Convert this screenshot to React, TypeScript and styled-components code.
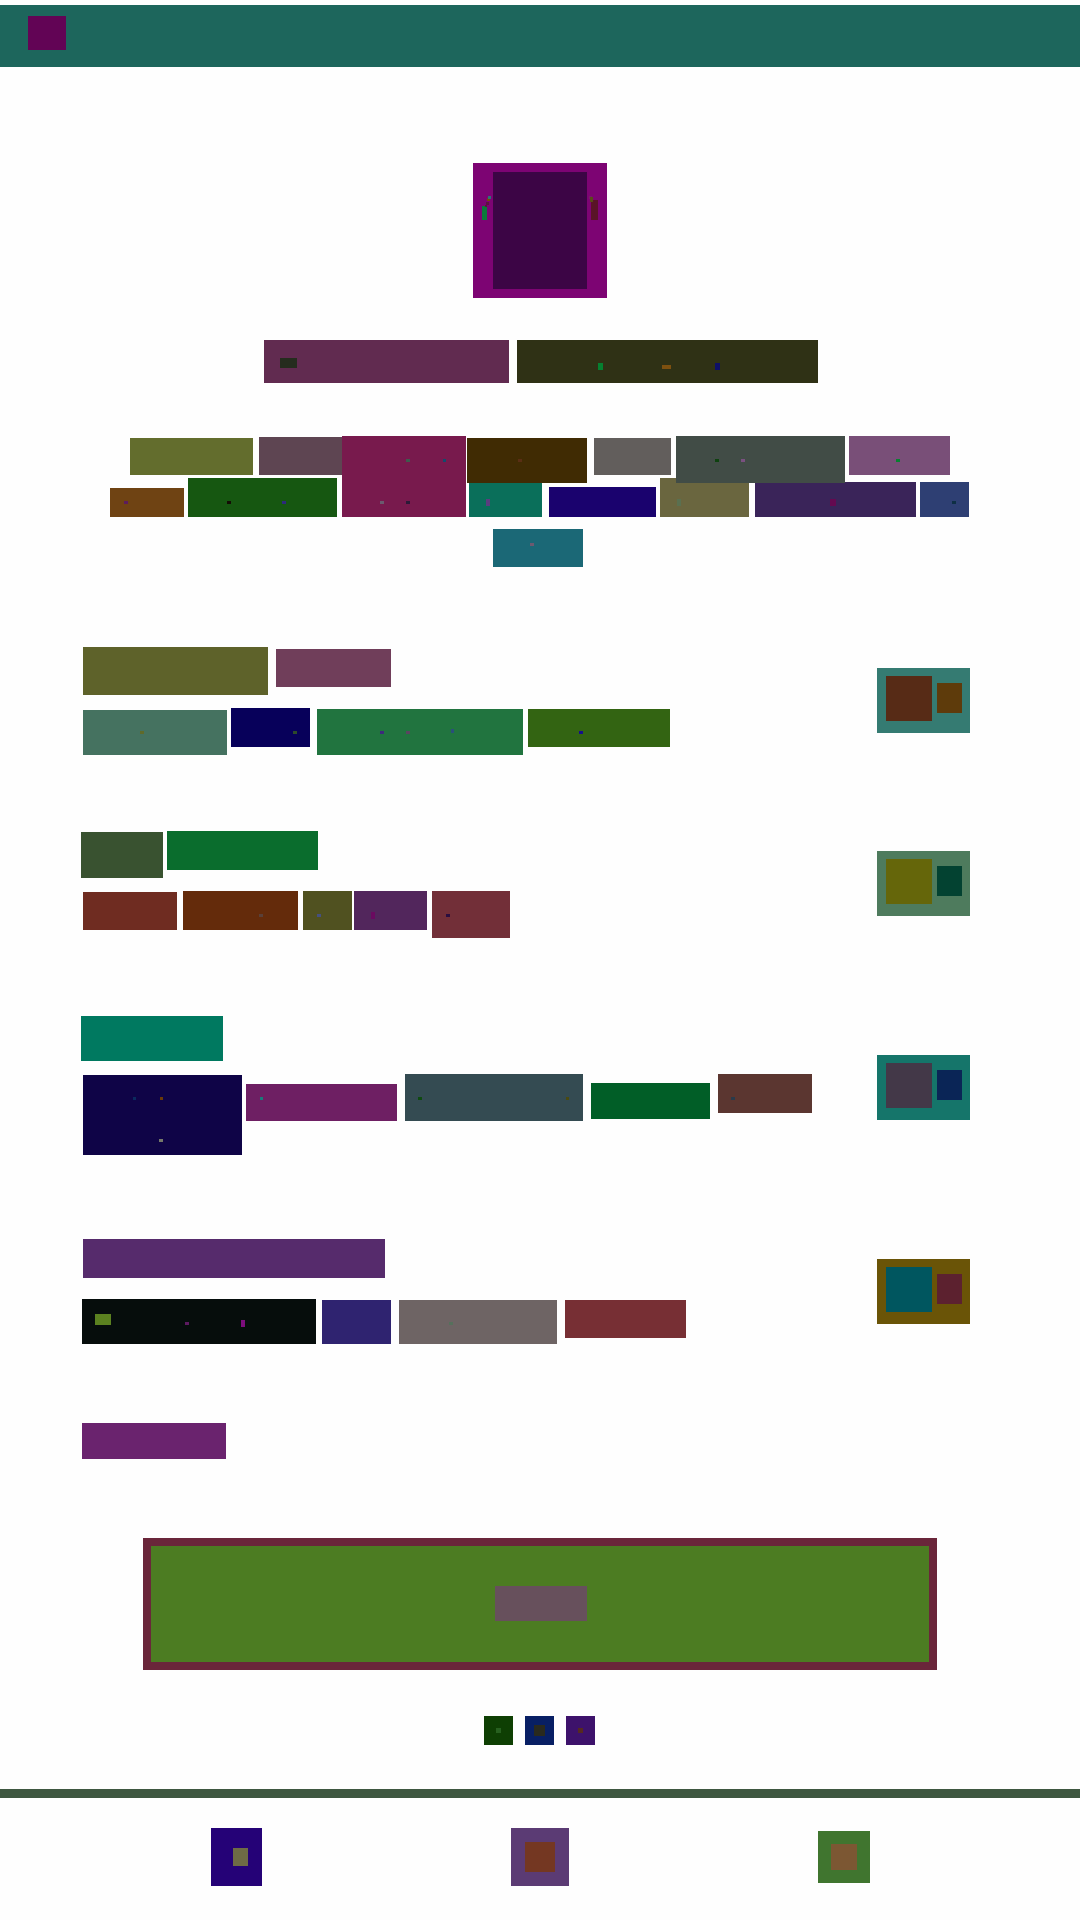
import React from 'react'
import styled, {createGlobalStyle} from 'styled-components'

interface MarkData {
  x: number
  y: number
  w: number
  h: number
  c: string
}

interface WordData {
  x: number
  y: number
  w: number
  h: number
  c: string
  marks?: MarkData[]
}

interface LineData {
  top: number
  height: number
  raised?: boolean
  words: WordData[]
}

const m = (x: number, y: number, w: number, h: number, c: string): MarkData => ({x, y, w, h, c})

const GlobalStyle = createGlobalStyle`
  html, body {
    margin: 0;
    padding: 0;
    background: #fefefe;
  }
  body {
    font-family: "Liberation Sans", sans-serif;
  }
  * {
    box-sizing: border-box;
  }
`

const Page = styled.div`
  width: 1080px;
  height: 1920px;
  overflow: hidden;
  padding-top: 5px;
`

const Header = styled.header`
  display: flex;
  align-items: flex-start;
  height: 62px;
  padding: 11px 0 0 28px;
  background: #1d665c;
`

const Logo = styled.div`
  width: 38px;
  height: 34px;
  background: #620455;
`

const Hero = styled.section`
  display: flex;
  justify-content: center;
  margin-top: 96px;
`

const Door = styled.div`
  position: relative;
  width: 134px;
  height: 135px;
  padding: 9px 20px;
  background: #7d0473;
`

const DoorPanel = styled.div`
  width: 94px;
  height: 117px;
  background: #3c0545;
`

const Block = styled.div<{$mt?: number}>`
  margin-top: ${(p) => p.$mt ?? 0}px;
`

const Section = styled.section<{$mt: number}>`
  display: flex;
  align-items: flex-start;
  justify-content: space-between;
  margin-top: ${(p) => p.$mt}px;
  padding-right: 110px;
`

const Lines = styled.div`
  flex: 1;
`

const Line = styled.div<{$height: number; $raised?: boolean}>`
  display: flex;
  align-items: flex-start;
  height: ${(p) => p.$height}px;
  ${(p) =>
    p.$raised &&
    `
  position: relative;
  z-index: 1;
`}
`

const Word = styled.span<{$w: number; $h: number; $c: string; $ml: number; $mt: number}>`
  position: relative;
  display: block;
  flex-shrink: 0;
  width: ${(p) => p.$w}px;
  height: ${(p) => p.$h}px;
  margin-left: ${(p) => p.$ml}px;
  margin-top: ${(p) => p.$mt}px;
  background: ${(p) => p.$c};
`

const Mark = styled.i<{$x: number; $y: number; $w: number; $h: number; $c: string}>`
  position: absolute;
  left: ${(p) => p.$x}px;
  top: ${(p) => p.$y}px;
  width: ${(p) => p.$w}px;
  height: ${(p) => p.$h}px;
  background: ${(p) => p.$c};
`

const Card = styled.div<{$mt: number; $c: string}>`
  display: flex;
  align-items: flex-start;
  flex-shrink: 0;
  gap: 5px;
  width: 93px;
  height: 65px;
  margin-top: ${(p) => p.$mt}px;
  padding: 8px 0 0 9px;
  background: ${(p) => p.$c};
`

const CardLarge = styled.div<{$c: string}>`
  width: 46px;
  height: 45px;
  background: ${(p) => p.$c};
`

const CardSmall = styled.div<{$c: string}>`
  width: 25px;
  height: 30px;
  margin-top: 7px;
  background: ${(p) => p.$c};
`

const Banner = styled.div`
  display: flex;
  align-items: flex-start;
  justify-content: center;
  width: 794px;
  height: 132px;
  margin: 79px 0 0 143px;
  padding-top: 40px;
  border: 8px solid #6a263a;
  background: #4c7c22;
`

const BannerButton = styled.div`
  width: 92px;
  height: 35px;
  margin-left: 2px;
  background: #67505c;
`

const Pager = styled.nav`
  display: flex;
  gap: 12px;
  margin: 46px 0 0 484px;
`

const PagerItem = styled.div<{$c: string}>`
  display: flex;
  align-items: center;
  justify-content: center;
  width: 29px;
  height: 29px;
  background: ${(p) => p.$c};
`

const PagerGlyph = styled.span<{$size: number; $c: string}>`
  display: block;
  width: ${(p) => p.$size}px;
  height: ${(p) => p.$size}px;
  background: ${(p) => p.$c};
`

const FooterBar = styled.div`
  height: 9px;
  margin-top: 44px;
  background: #3e5740;
`

const FooterNav = styled.footer`
  display: flex;
  align-items: center;
  height: 58px;
  margin: 30px 0 0 211px;
`

const FooterItem = styled.div<{$w: number; $h: number; $c: string; $ml?: number}>`
  display: flex;
  align-items: center;
  justify-content: center;
  width: ${(p) => p.$w}px;
  height: ${(p) => p.$h}px;
  margin-left: ${(p) => p.$ml ?? 0}px;
  background: ${(p) => p.$c};
`

const FooterGlyph = styled.span<{$w: number; $h: number; $c: string; $shift?: number}>`
  display: block;
  width: ${(p) => p.$w}px;
  height: ${(p) => p.$h}px;
  margin-left: ${(p) => p.$shift ?? 0}px;
  background: ${(p) => p.$c};
`

const doorMarks: MarkData[] = [
  m(482, 206, 5, 14, '#0a7a3a'),
  m(485, 205, 2, 2, '#5c1440'),
  m(486, 202, 3, 3, '#5c1440'),
  m(487, 198, 3, 3, '#7a4410'),
  m(488, 196, 3, 3, '#2a7478'),
  m(591, 200, 7, 20, '#5a1428'),
  m(589, 196, 3, 3, '#7a1a6a'),
  m(590, 197, 3, 5, '#5a4a18'),
]

const titleLine: LineData = {
  top: 340,
  height: 43,
  words: [
    {x: 264, y: 340, w: 245, h: 43, c: '#612b50', marks: [m(280, 358, 17, 10, '#252c1e')]},
    {
      x: 517,
      y: 340,
      w: 301,
      h: 43,
      c: '#2f3115',
      marks: [m(598, 363, 5, 7, '#068030'), m(662, 365, 9, 4, '#7d500f'), m(715, 363, 5, 7, '#0e1068')],
    },
  ],
}

const introLines: LineData[] = [
  {
    top: 436,
    height: 42,
    raised: true,
    words: [
      {x: 130, y: 438, w: 123, h: 37, c: '#636d2d'},
      {x: 259, y: 437, w: 83, h: 38, c: '#5e4552'},
      {
        x: 342,
        y: 436,
        w: 124,
        h: 81,
        c: '#781a4d',
        marks: [
          m(406, 459, 4, 3, '#3f5a4d'),
          m(443, 459, 3, 3, '#134a6c'),
          m(380, 501, 4, 3, '#6b5a6e'),
          m(406, 501, 4, 3, '#2c1a38'),
        ],
      },
      {x: 467, y: 438, w: 120, h: 45, c: '#402b03', marks: [m(518, 459, 4, 3, '#5a2e14')]},
      {x: 594, y: 438, w: 77, h: 37, c: '#625e5c'},
      {
        x: 676,
        y: 436,
        w: 169,
        h: 47,
        c: '#414c46',
        marks: [m(715, 459, 4, 3, '#0e420f'), m(741, 459, 4, 3, '#7a5080')],
      },
      {x: 849, y: 436, w: 101, h: 39, c: '#794f78', marks: [m(896, 459, 4, 3, '#078030')]},
    ],
  },
  {
    top: 478,
    height: 51,
    words: [
      {x: 110, y: 488, w: 74, h: 29, c: '#6f4313', marks: [m(124, 501, 4, 3, '#5c1d5c')]},
      {
        x: 188,
        y: 478,
        w: 149,
        h: 39,
        c: '#165711',
        marks: [m(227, 501, 4, 3, '#140d05'), m(282, 501, 4, 3, '#2d2a7b')],
      },
      {x: 469, y: 483, w: 73, h: 34, c: '#0a6f5a', marks: [m(486, 499, 4, 7, '#5a3e7f')]},
      {x: 549, y: 487, w: 107, h: 30, c: '#1a026e'},
      {x: 660, y: 478, w: 89, h: 39, c: '#6a663f', marks: [m(677, 499, 4, 7, '#5a7050')]},
      {x: 755, y: 482, w: 161, h: 35, c: '#3a2459', marks: [m(830, 499, 6, 7, '#640a50')]},
      {x: 920, y: 482, w: 49, h: 35, c: '#2e3f73', marks: [m(952, 501, 4, 3, '#0e2f44')]},
    ],
  },
  {
    top: 529,
    height: 38,
    words: [{x: 493, y: 529, w: 90, h: 38, c: '#1b6876', marks: [m(530, 543, 4, 3, '#6c5a70')]}],
  },
]

const sectionOne: LineData[] = [
  {
    top: 647,
    height: 61,
    words: [
      {x: 83, y: 647, w: 185, h: 48, c: '#5e622a'},
      {x: 276, y: 649, w: 115, h: 38, c: '#703e5a'},
    ],
  },
  {
    top: 708,
    height: 47,
    words: [
      {x: 83, y: 710, w: 144, h: 45, c: '#457260', marks: [m(140, 731, 4, 3, '#5f6a2a')]},
      {x: 231, y: 708, w: 79, h: 39, c: '#07005a', marks: [m(293, 731, 4, 3, '#2e4a2a')]},
      {
        x: 317,
        y: 709,
        w: 206,
        h: 46,
        c: '#21743f',
        marks: [m(380, 731, 4, 3, '#3d2a7c'), m(406, 731, 4, 3, '#5a4560'), m(451, 729, 3, 4, '#29507a')],
      },
      {x: 528, y: 709, w: 142, h: 38, c: '#336412', marks: [m(579, 731, 4, 3, '#15108c')]},
    ],
  },
]

const sectionTwo: LineData[] = [
  {
    top: 831,
    height: 60,
    words: [
      {x: 81, y: 832, w: 82, h: 46, c: '#395230'},
      {x: 167, y: 831, w: 151, h: 39, c: '#0a6d2d'},
    ],
  },
  {
    top: 891,
    height: 47,
    words: [
      {x: 83, y: 892, w: 94, h: 38, c: '#6f2c21'},
      {x: 183, y: 891, w: 115, h: 39, c: '#642b0b', marks: [m(259, 914, 4, 3, '#5a4038')]},
      {x: 303, y: 891, w: 49, h: 39, c: '#505120', marks: [m(317, 914, 4, 3, '#45507f')]},
      {x: 354, y: 891, w: 73, h: 39, c: '#52265c', marks: [m(371, 912, 4, 7, '#6a0a60')]},
      {x: 432, y: 891, w: 78, h: 47, c: '#722f38', marks: [m(446, 914, 4, 3, '#2a0e40')]},
    ],
  },
]

const sectionThree: LineData[] = [
  {
    top: 1016,
    height: 58,
    words: [{x: 81, y: 1016, w: 142, h: 45, c: '#007960'}],
  },
  {
    top: 1074,
    height: 81,
    words: [
      {
        x: 83,
        y: 1075,
        w: 159,
        h: 80,
        c: '#0f0447',
        marks: [m(133, 1097, 3, 3, '#0a2a5e'), m(160, 1097, 3, 3, '#6a3a08'), m(159, 1139, 4, 3, '#75786a')],
      },
      {x: 246, y: 1084, w: 151, h: 37, c: '#6e1f63', marks: [m(260, 1097, 3, 3, '#1a7a7a')]},
      {
        x: 405,
        y: 1074,
        w: 178,
        h: 47,
        c: '#344b52',
        marks: [m(418, 1097, 4, 3, '#0e4a10'), m(566, 1097, 3, 3, '#4a4a10')],
      },
      {x: 591, y: 1083, w: 119, h: 36, c: '#015e27'},
      {x: 718, y: 1074, w: 94, h: 39, c: '#5b3630', marks: [m(731, 1097, 4, 3, '#2a3a4a')]},
    ],
  },
]

const sectionFour: LineData[] = [
  {
    top: 1239,
    height: 60,
    words: [{x: 83, y: 1239, w: 302, h: 39, c: '#562b6c'}],
  },
  {
    top: 1299,
    height: 45,
    words: [
      {
        x: 82,
        y: 1299,
        w: 234,
        h: 45,
        c: '#060d0c',
        marks: [m(95, 1314, 16, 11, '#5b8120'), m(185, 1322, 4, 3, '#5c1a60'), m(241, 1320, 4, 7, '#7c0d7c')],
      },
      {x: 322, y: 1300, w: 69, h: 44, c: '#2f2370'},
      {x: 399, y: 1300, w: 158, h: 44, c: '#6e6464', marks: [m(449, 1322, 4, 3, '#56705c')]},
      {x: 565, y: 1300, w: 121, h: 38, c: '#772f34'},
    ],
  },
]

const sectionFive: LineData[] = [
  {
    top: 1423,
    height: 36,
    words: [{x: 82, y: 1423, w: 144, h: 36, c: '#6a236e'}],
  },
]

const WordLine: React.FC<{line: LineData}> = ({line}) => {
  let right = 0
  return (
    <Line $height={line.height} $raised={line.raised}>
      {line.words.map((word) => {
        const ml = word.x - right
        right = word.x + word.w
        return (
          <Word key={word.x} $w={word.w} $h={word.h} $c={word.c} $ml={ml} $mt={word.y - line.top}>
            {word.marks?.map((mark) => (
              <Mark
                key={`${mark.x}-${mark.y}`}
                $x={mark.x - word.x}
                $y={mark.y - word.y}
                $w={mark.w}
                $h={mark.h}
                $c={mark.c}
              />
            ))}
          </Word>
        )
      })}
    </Line>
  )
}

const App: React.FC = () => {
  return (
    <Page>
      <GlobalStyle />
      <Header>
        <Logo />
      </Header>

      <Hero>
        <Door>
          <DoorPanel />
          {doorMarks.map((mark) => (
            <Mark
              key={`${mark.x}-${mark.y}`}
              $x={mark.x - 473}
              $y={mark.y - 163}
              $w={mark.w}
              $h={mark.h}
              $c={mark.c}
            />
          ))}
        </Door>
      </Hero>

      <Block $mt={42}>
        <WordLine line={titleLine} />
      </Block>

      <Block $mt={53}>
        {introLines.map((line) => (
          <WordLine key={line.top} line={line} />
        ))}
      </Block>

      <Section $mt={80}>
        <Lines>
          {sectionOne.map((line) => (
            <WordLine key={line.top} line={line} />
          ))}
        </Lines>
        <Card $mt={21} $c="#357b72">
          <CardLarge $c="#572b16" />
          <CardSmall $c="#5e3b0b" />
        </Card>
      </Section>

      <Section $mt={76}>
        <Lines>
          {sectionTwo.map((line) => (
            <WordLine key={line.top} line={line} />
          ))}
        </Lines>
        <Card $mt={20} $c="#4e7b5d">
          <CardLarge $c="#65660a" />
          <CardSmall $c="#034231" />
        </Card>
      </Section>

      <Section $mt={78}>
        <Lines>
          {sectionThree.map((line) => (
            <WordLine key={line.top} line={line} />
          ))}
        </Lines>
        <Card $mt={39} $c="#15756a">
          <CardLarge $c="#433848" />
          <CardSmall $c="#0a2556" />
        </Card>
      </Section>

      <Section $mt={84}>
        <Lines>
          {sectionFour.map((line) => (
            <WordLine key={line.top} line={line} />
          ))}
        </Lines>
        <Card $mt={20} $c="#6a5407">
          <CardLarge $c="#00565f" />
          <CardSmall $c="#5c212f" />
        </Card>
      </Section>

      <Section $mt={79}>
        <Lines>
          {sectionFive.map((line) => (
            <WordLine key={line.top} line={line} />
          ))}
        </Lines>
      </Section>

      <Banner>
        <BannerButton />
      </Banner>

      <Pager>
        <PagerItem $c="#0e3f03">
          <PagerGlyph $size={5} $c="#27601f" />
        </PagerItem>
        <PagerItem $c="#081f64">
          <PagerGlyph $size={11} $c="#2a2a1e" />
        </PagerItem>
        <PagerItem $c="#3d126b">
          <PagerGlyph $size={5} $c="#562a20" />
        </PagerItem>
      </Pager>

      <FooterBar />

      <FooterNav>
        <FooterItem $w={51} $h={58} $c="#250277">
          <FooterGlyph $w={15} $h={18} $c="#6e6b45" $shift={8} />
        </FooterItem>
        <FooterItem $w={58} $h={58} $c="#5b3b74" $ml={249}>
          <FooterGlyph $w={30} $h={30} $c="#743722" />
        </FooterItem>
        <FooterItem $w={52} $h={52} $c="#40752f" $ml={249}>
          <FooterGlyph $w={26} $h={26} $c="#7c5733" />
        </FooterItem>
      </FooterNav>
    </Page>
  )
}

export default App
